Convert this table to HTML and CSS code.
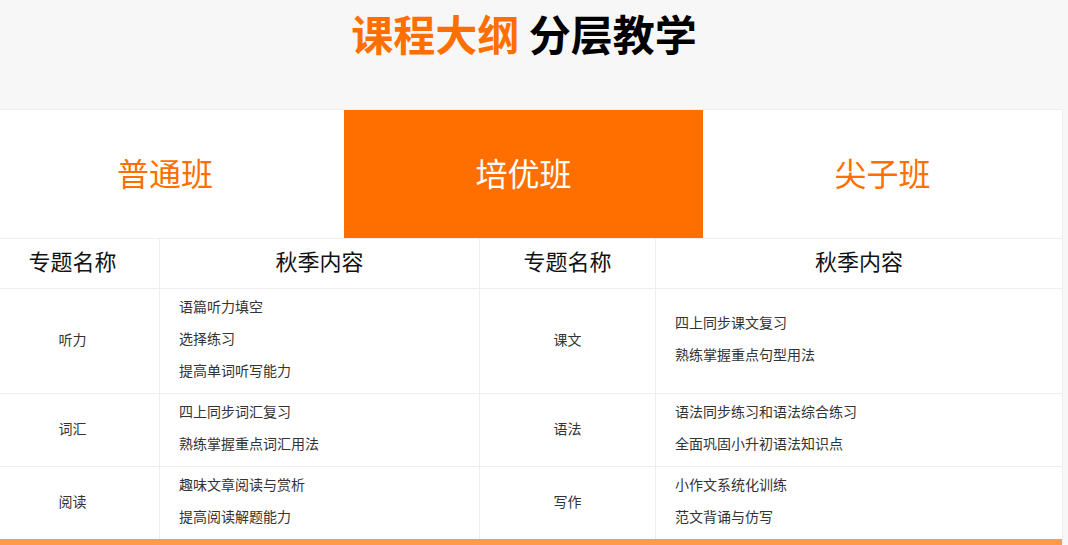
FILE: index.html
```html
<!DOCTYPE html>
<html lang="zh-CN">
<head>
    <meta charset="UTF-8">
    <meta name="viewport" content="width=device-width, initial-scale=1.0">
    <title>课程大纲 分层教学</title>
    <link rel="stylesheet" href="styles.css">
</head>
<body>
    <div class="outline">
        <h1 class="title"><span class="accent">课程大纲</span> 分层教学</h1>
        <div class="panel">
            <div class="tabs">
                <div class="tab">普通班</div>
                <div class="tab active">培优班</div>
                <div class="tab">尖子班</div>
            </div>
            <table class="course">
                <colgroup>
                    <col class="c-name">
                    <col class="c-items">
                    <col class="c-name2">
                    <col class="c-items2">
                </colgroup>
                <thead>
                    <tr>
                        <th>专题名称</th>
                        <th>秋季内容</th>
                        <th>专题名称</th>
                        <th>秋季内容</th>
                    </tr>
                </thead>
                <tbody>
                    <tr>
                        <td class="name">听力</td>
                        <td class="items">
                            <div>语篇听力填空</div>
                            <div>选择练习</div>
                            <div>提高单词听写能力</div>
                        </td>
                        <td class="name">课文</td>
                        <td class="items">
                            <div>四上同步课文复习</div>
                            <div>熟练掌握重点句型用法</div>
                        </td>
                    </tr>
                    <tr>
                        <td class="name">词汇</td>
                        <td class="items">
                            <div>四上同步词汇复习</div>
                            <div>熟练掌握重点词汇用法</div>
                        </td>
                        <td class="name">语法</td>
                        <td class="items">
                            <div>语法同步练习和语法综合练习</div>
                            <div>全面巩固小升初语法知识点</div>
                        </td>
                    </tr>
                    <tr>
                        <td class="name">阅读</td>
                        <td class="items">
                            <div>趣味文章阅读与赏析</div>
                            <div>提高阅读解题能力</div>
                        </td>
                        <td class="name">写作</td>
                        <td class="items">
                            <div>小作文系统化训练</div>
                            <div>范文背诵与仿写</div>
                        </td>
                    </tr>
                </tbody>
            </table>
            <div class="bottom-bar"></div>
        </div>
    </div>
</body>
</html>
```

FILE: styles.css
```css
body {
    margin: 0;
    background-color: #f7f7f7;
    font-family: "Noto Sans CJK SC", "Noto Sans", sans-serif;
    color: #333;
    overflow: hidden;
}

.outline {
    width: 1078px;
    margin-left: -15px;
}

.title {
    margin: 0;
    height: 109px;
    padding-top: 7px;
    box-sizing: border-box;
    text-align: center;
    font-size: 42px;
    line-height: 52px;
    font-weight: bold;
    color: #000;
}

.title .accent {
    color: #ff6f00;
}

.panel {
    background-color: #fff;
    border: 1px solid #eee;
    border-bottom: none;
}

.tabs {
    display: flex;
    height: 128px;
    border-bottom: 1px solid #eee;
}

.tab {
    width: 359px;
    display: flex;
    align-items: center;
    justify-content: center;
    padding-bottom: 4px;
    font-size: 32px;
    color: #ff6f00;
}

.tab:first-child {
    width: 358px;
}

.tab.active {
    background-color: #ff6f00;
    color: #fff;
}

.course {
    width: 100%;
    border-collapse: separate;
    border-spacing: 0;
    table-layout: fixed;
}

.c-name { width: 174px; }
.c-items { width: 320px; }
.c-name2 { width: 176px; }
.c-items2 { width: 406px; }

.course th {
    padding: 0 0 7px;
    line-height: 42px;
    font-size: 22px;
    font-weight: normal;
    color: #111;
    border-bottom: 1px solid #eee;
    border-right: 1px solid #eee;
}

.course td {
    padding: 1px 19px 7px;
    font-size: 14px;
    line-height: 32px;
    border-bottom: 1px solid #eee;
    border-right: 1px solid #eee;
    vertical-align: middle;
}

.course th:last-child,
.course td:last-child {
    border-right: none;
}

.course tbody tr:last-child td {
    border-bottom: none;
}

.course td.name {
    text-align: center;
    padding: 0 0 4px;
}

.bottom-bar {
    height: 8px;
    background-color: #ff9a4a;
}
```
